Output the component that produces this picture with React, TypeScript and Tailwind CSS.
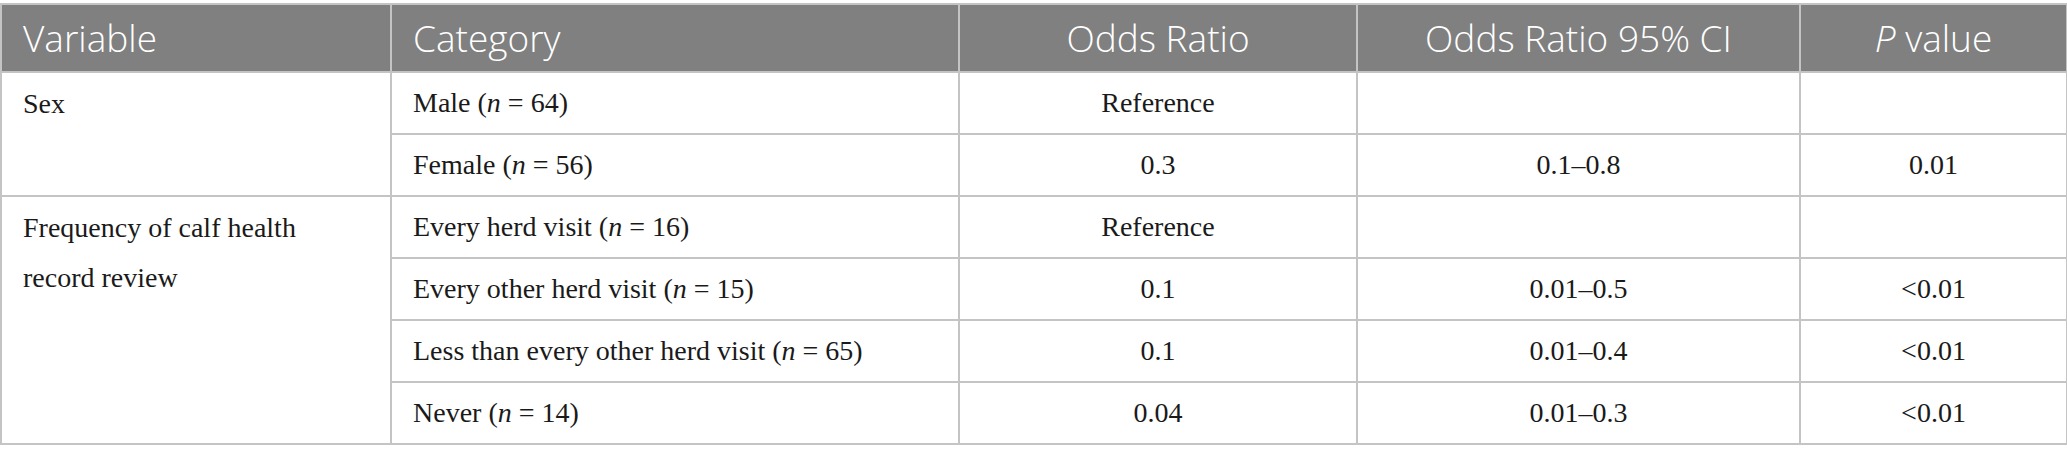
const serif = "font-['Liberation_Serif','Times_New_Roman',serif]";

function N({ v }: { v: number }) {
  return (
    <>
      (<i>n</i> = {v})
    </>
  );
}

const rows: {
  variable?: React.ReactNode;
  span?: number;
  category: React.ReactNode;
  or: string;
  ci: string;
  p: string;
}[] = [
  { variable: "Sex", span: 2, category: <>Male <N v={64} /></>, or: "Reference", ci: "", p: "" },
  { category: <>Female <N v={56} /></>, or: "0.3", ci: "0.1–0.8", p: "0.01" },
  {
    variable: (
      <>
        Frequency of calf health
        <br />
        record review
      </>
    ),
    span: 4,
    category: <>Every herd visit <N v={16} /></>,
    or: "Reference",
    ci: "",
    p: "",
  },
  { category: <>Every other herd visit <N v={15} /></>, or: "0.1", ci: "0.01–0.5", p: "<0.01" },
  { category: <>Less than every other herd visit <N v={65} /></>, or: "0.1", ci: "0.01–0.4", p: "<0.01" },
  { category: <>Never <N v={14} /></>, or: "0.04", ci: "0.01–0.3", p: "<0.01" },
];

export default function App() {
  const th = "h-[68px] border-2 border-[#c4c4c4] px-[21px] font-light text-white text-[37px] leading-[44px]";
  const td = "h-[62px] border-2 border-[#c4c4c4] px-[21px] text-[28px] text-[#1a1a1a]";

  return (
    <div className="w-[2067px] h-[460px] bg-white pt-[3px]">
      <table className="w-[2066px] table-fixed border-collapse">
        <colgroup>
          <col className="w-[390px]" />
          <col className="w-[568px]" />
          <col className="w-[398px]" />
          <col className="w-[443px]" />
          <col className="w-[267px]" />
        </colgroup>
        <thead>
          <tr className="bg-[#808080] font-['Open_Sans',sans-serif]">
            <th className={`${th} text-left`}>Variable</th>
            <th className={`${th} text-left`}>Category</th>
            <th className={`${th} text-center`}>Odds Ratio</th>
            <th className={`${th} text-center`}>Odds Ratio 95% CI</th>
            <th className={`${th} text-center`}>
              <i>P</i> value
            </th>
          </tr>
        </thead>
        <tbody className={serif}>
          {rows.map((r, i) => (
            <tr key={i}>
              {r.variable && (
                <td rowSpan={r.span} className={`${td} align-top pt-[6px] text-left`}>
                  <div className="leading-[50px]">{r.variable}</div>
                </td>
              )}
              <td className={`${td} align-middle leading-[48px] text-left`}>{r.category}</td>
              <td className={`${td} align-middle leading-[48px] text-center`}>{r.or}</td>
              <td className={`${td} align-middle leading-[48px] text-center`}>{r.ci}</td>
              <td className={`${td} align-middle leading-[48px] text-center`}>{r.p}</td>
            </tr>
          ))}
        </tbody>
      </table>
    </div>
  );
}
